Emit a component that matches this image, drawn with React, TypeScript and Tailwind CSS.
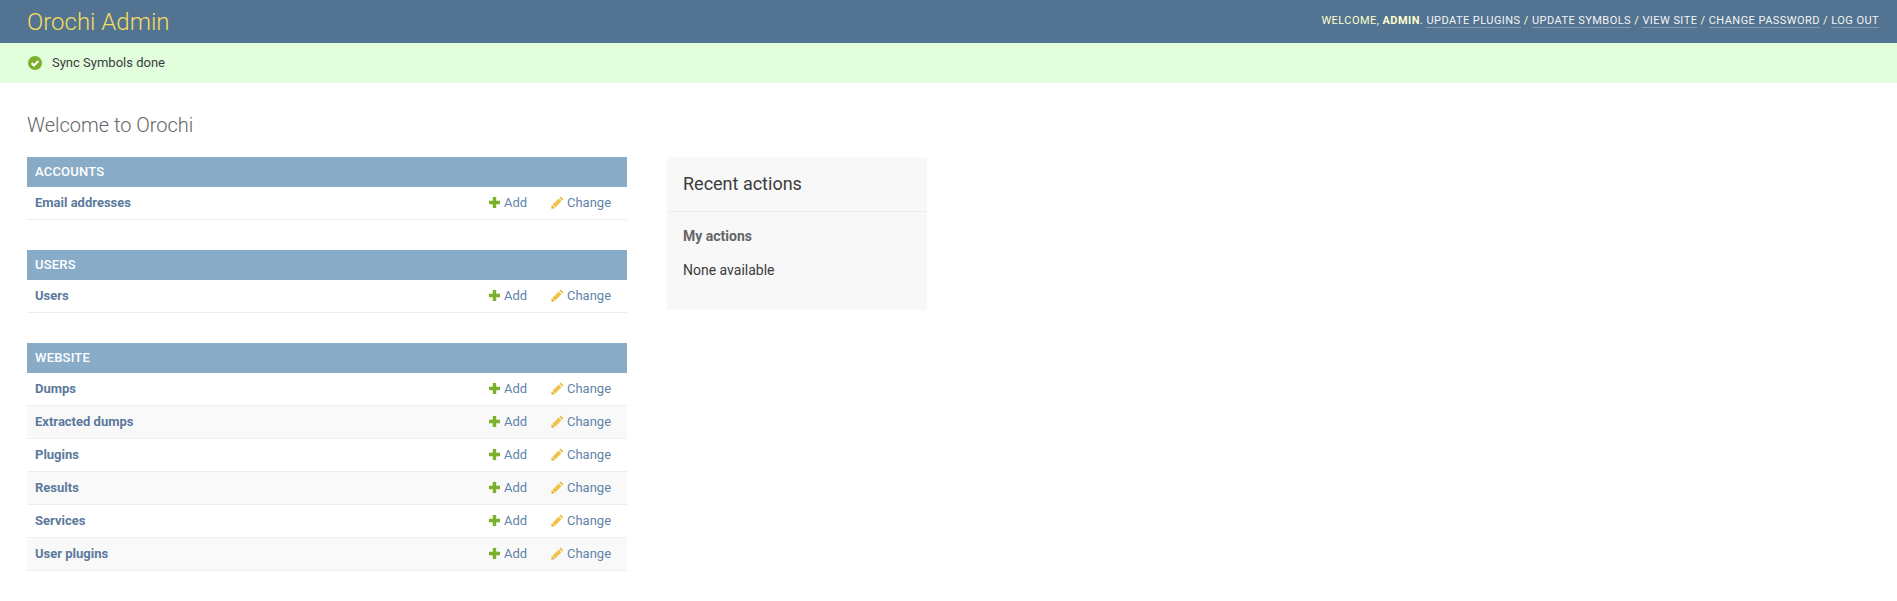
const ROBOTO = "font-['Roboto','Liberation_Sans',sans-serif]";

const MODULES = [
  { name: "Accounts", models: ["Email addresses"] },
  { name: "Users", models: ["Users"] },
  { name: "Website", models: ["Dumps", "Extracted dumps", "Plugins", "Results", "Services", "User plugins"] },
];

const USER_LINKS = ["Update plugins", "Update symbols", "View site", "Change password", "Log out"];

function AddIcon() {
  return (
    <svg width="13" height="13" viewBox="0 0 13 13" className="-mt-0.5 shrink-0">
      <path d="M4.800 1h3.400v3.800H12v3.400H8.200V12H4.800V8.200H1V4.800h3.800z" fill="#7ab02c" />
    </svg>
  );
}

function ChangeIcon() {
  return (
    <svg width="13" height="13" viewBox="0 0 13 13" className="-mt-0.5 shrink-0">
      <path d="M9.600.6l2.800 2.800-1.200 1.200-2.800-2.800z" fill="#e9b93a" />
      <path d="M7.700 2.500l2.800 2.800-6.400 6.400-2.800-2.800z" fill="#efc34a" />
      <path d="M.7 9.300l3 3-3.400.5z" fill="#e0a92c" />
    </svg>
  );
}

function SuccessIcon() {
  return (
    <svg width="14" height="14" viewBox="0 0 14 14" className="shrink-0">
      <circle cx="7" cy="7" r="7" fill="#7ab02c" />
      <path d="M3.600 7.100l2.400 2.400 4.400-4.500" fill="none" stroke="#ffffff" strokeWidth="2.200" />
    </svg>
  );
}

function ModelRow({ name, shaded }: { name: string; shaded: boolean }) {
  return (
    <div className={`flex h-[33px] items-center border-b border-[#eeeeee] pl-2 pr-[17px] text-[13px] ${shaded ? "bg-[#f9f9f9]" : "bg-white"}`}>
      <a className="flex-1 font-bold text-[#5b7a9b]">{name}</a>
      <a className="flex w-[38px] items-center gap-[3px] text-[#5f84a8]">
        <AddIcon />
        Add
      </a>
      <a className="ml-[25px] flex w-[59px] items-center gap-[3px] text-[#5f84a8]">
        <ChangeIcon />
        Change
      </a>
    </div>
  );
}

function AppModule({ name, models }: { name: string; models: string[] }) {
  return (
    <section className="mb-[30px]">
      <div className="flex h-[30px] items-center bg-[#88abc7] px-2 text-[13px] font-medium uppercase tracking-[0.2px] text-white">
        {name}
      </div>
      {models.map((model, i) => (
        <ModelRow key={model} name={model} shaded={i % 2 === 1} />
      ))}
    </section>
  );
}

export default function App() {
  return (
    <div className={`min-h-[601px] bg-white ${ROBOTO} text-[#3c3c3c]`}>
      <header className="flex h-[43px] items-center justify-between bg-[#527391] pl-[27px] pr-[18px]">
        <h1 className="text-[24px] font-light text-[#f5dd5d]">Orochi Admin</h1>
        <div className="text-[11px] uppercase tracking-[0.45px] text-[#ffffcc]">
          Welcome, <strong>admin</strong>.{" "}
          {USER_LINKS.map((link, i) => (
            <span key={link}>
              {i > 0 && " / "}
              <a className="border-b border-[#8399b0] text-[#f5f5f5]">{link}</a>
            </span>
          ))}
        </div>
      </header>

      <div className="flex h-10 items-center gap-[10px] bg-[#e2fedd] pl-[28px] text-[13px]">
        <SuccessIcon />
        Sync Symbols done
      </div>

      <main className="px-[27px] pt-[30px]">
        <h2 className="mb-5 h-[24px] text-[20px] leading-6 font-light text-[#666666]">Welcome to Orochi</h2>
        <div className="flex items-start gap-10">
          <div className="w-[600px]">
            {MODULES.map((m) => (
              <AppModule key={m.name} name={m.name} models={m.models} />
            ))}
          </div>
          <aside className="h-[153px] w-[260px] bg-[#f8f8f8]">
            <h3 className="flex h-[55px] items-center border-b border-[#eeeeee] px-4 pb-[2px] text-[18px]">Recent actions</h3>
            <h4 className="mt-[14px] px-4 text-[14px] leading-5 font-bold text-[#666666]">My actions</h4>
            <p className="mt-[14px] px-4 text-[14px] leading-5">None available</p>
          </aside>
        </div>
      </main>
    </div>
  );
}
